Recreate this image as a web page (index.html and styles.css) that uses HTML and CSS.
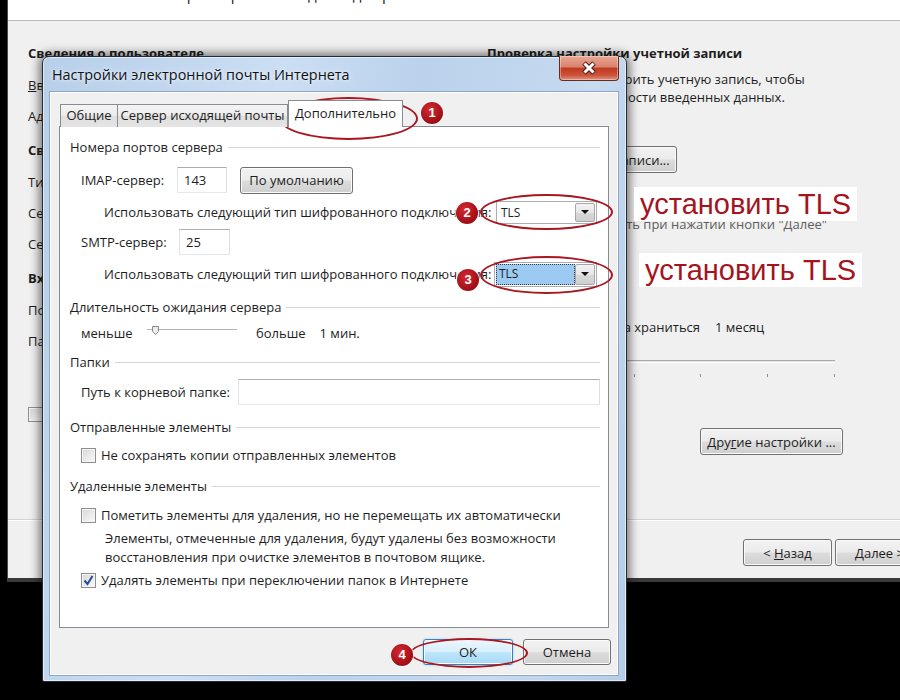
FILE: index.html
```html
<!DOCTYPE html>
<html lang="ru">
<head>
    <meta charset="UTF-8">
    <meta name="viewport" content="width=device-width, initial-scale=1.0">
    <title>Настройки электронной почты Интернета</title>
    <link rel="stylesheet" href="styles.css">
</head>
<body>
<div class="desk">
    <!-- main window behind the dialog -->
    <div class="bgwin">
        <div class="bg-head"><p>Все эти параметры необходимы для работы</p></div>
        <div class="bg-body">
            <div class="bg-left">
                <h3 class="bg-title">Сведения о пользователе</h3>
                <div class="bg-row"><u>В</u>ведите имя:</div>
                <div class="bg-row">Адрес электронной почты:</div>
                <h3 class="bg-title gap">Сведения о сервере</h3>
                <div class="bg-row">Тип учетной записи:</div>
                <div class="bg-row">Сервер входящей почты:</div>
                <div class="bg-row">Сервер исходящей почты (SMTP):</div>
                <h3 class="bg-title gap">Вход в систему</h3>
                <div class="bg-row">Пользователь:</div>
                <div class="bg-row">Пароль:</div>
                <div class="bg-check"><span class="cb"></span>Запомнить пароль</div>
            </div>
            <div class="bg-right">
                <h3 class="bg-title">Проверка настройки учетной записи</h3>
                <p class="bg-text">Рекомендуется проверить учетную запись, чтобы<br>убедиться в правильности введенных данных.</p>
                <button type="button" class="w7btn check-btn">Проверка учетной записи...</button>
                <div class="bg-auto"><span class="cb"></span>Проверять при нажатии кнопки "Далее"</div>
                <div class="bg-keep"><span class="keep-label">Автономная почта должна храниться</span><span class="keep-val">1 месяц</span></div>
                <div class="bg-slider">
                    <div class="bg-track"></div>
                    <div class="bg-ticks"><i></i><i></i><i></i><i></i><i></i><i></i></div>
                </div>
                <button type="button" class="w7btn more-btn">Дру<u>г</u>ие настройки ...</button>
            </div>
        </div>
        <div class="bg-foot">
            <button type="button" class="w7btn nav-btn">&lt; <u>Н</u>азад</button>
            <button type="button" class="w7btn nav-btn"><u>Д</u>алее &gt;</button>
        </div>
    </div>

    <!-- dialog window -->
    <div class="dlg">
        <div class="dlg-bar">
            <span class="dlg-title">Настройки электронной почты Интернета</span>
            <button type="button" class="dlg-close">
                <svg width="16" height="14" viewBox="0 0 16 14"><path d="M3 2L13 12M13 2L3 12" stroke="#4b1c14" stroke-width="5"/><path d="M3.5 2.5L12.5 11.5M12.5 2.5L3.5 11.5" stroke="#fff" stroke-width="3"/></svg>
            </button>
        </div>
        <div class="dlg-client">
            <div class="tabs">
                <div class="tab t1">Общие</div>
                <div class="tab t2">Сервер исходящей почты</div>
                <div class="tab t3">Дополнительно</div>
            </div>
            <div class="panel">
                <div class="grp g1">Номера портов сервера</div>
                <div class="row r-imap">
                    <span class="lbl">IMAP-сервер:</span>
                    <span class="field port">143</span>
                    <button type="button" class="w7btn def-btn">По умолчанию</button>
                </div>
                <div class="row enc r-enc1">
                    <span class="lbl">Использовать следующий тип шифрованного подключения:</span>
                    <span class="combo"><span class="combo-val">TLS</span><span class="combo-arrow"></span></span>
                </div>
                <div class="row r-smtp">
                    <span class="lbl">SMTP-сервер:</span>
                    <span class="field port">25</span>
                </div>
                <div class="row enc r-enc2">
                    <span class="lbl">Использовать следующий тип шифрованного подключения:</span>
                    <span class="combo sel"><span class="combo-val">TLS</span><span class="combo-arrow"></span></span>
                </div>
                <div class="grp g2">Длительность ожидания сервера</div>
                <div class="row r-slide">
                    <span class="lbl">меньше</span>
                    <svg class="slider" width="90" height="20" viewBox="0 0 90 20"><rect x="0" y="6" width="90" height="1" fill="#b3b3b3"/><rect x="0" y="7" width="90" height="1" fill="#fff"/><path d="M5.5 3.5h6v5l-3 3l-3-3z" fill="#ececec" stroke="#8a8a8a"/></svg>
                    <span class="more">больше</span>
                    <span class="mins">1 мин.</span>
                </div>
                <div class="grp g3">Папки</div>
                <div class="row r-path">
                    <span class="lbl">Путь к корневой папке:</span>
                    <span class="field path"></span>
                </div>
                <div class="grp g4">Отправленные элементы</div>
                <div class="row r-cb1"><span class="cb"></span>Не сохранять копии отправленных элементов</div>
                <div class="grp g5">Удаленные элементы</div>
                <div class="row r-cb2"><span class="cb"></span>Пометить элементы для удаления, но не перемещать их автоматически</div>
                <p class="hint">Элементы, отмеченные для удаления, будут удалены без возможности<br>восстановления при очистке элементов в почтовом ящике.</p>
                <div class="row r-cb3"><span class="cb on"><svg width="11" height="11" viewBox="0 0 11 11"><path d="M1.5 5.5l3 3.5l5-8" fill="none" stroke="#2a4d8f" stroke-width="2"/></svg></span>Удалять элементы при переключении папок в Интернете</div>
            </div>
            <div class="dlg-btns">
                <button type="button" class="w7btn ok">ОК</button>
                <button type="button" class="w7btn cancel">Отмена</button>
            </div>
        </div>
    </div>

    <!-- red markup on top of the screenshot -->
    <span class="ring ring-1"></span>
    <span class="ring ring-2"></span>
    <span class="ring ring-3"></span>
    <span class="ring ring-4"></span>
    <span class="badge b1">1</span>
    <span class="badge b2">2</span>
    <span class="badge b3">3</span>
    <span class="badge b4">4</span>
    <span class="tls-note n1">установить TLS</span>
    <span class="tls-note n2">установить TLS</span>
</div>
</body>
</html>
```

FILE: styles.css
```css
*{margin:0;padding:0;box-sizing:border-box;}
body{width:900px;height:700px;overflow:hidden;background:#000;font-family:"Open Sans","Noto Sans",sans-serif;font-size:13px;color:#1e1e1e;}
.desk{position:relative;width:900px;height:700px;}
button{font:inherit;color:inherit;}

/* shared win7 button + checkbox */
.w7btn{flex:none;height:27px;border:1px solid #707070;border-radius:3px;background:linear-gradient(#f2f2f2 0%,#ebebeb 49%,#dddddd 51%,#cfcfcf 100%);box-shadow:inset 0 0 0 1px #fbfbfb;color:#1e1e1e;padding:0 6px;white-space:nowrap;}
.cb{flex:none;width:15px;height:15px;border:1px solid #8e8f8f;background:linear-gradient(135deg,#d6d6d6,#fbfbfb);box-shadow:inset 0 0 0 1px #f4f4f4;margin-right:5px;display:flex;align-items:center;justify-content:center;}

/* background window */
.bgwin{margin-left:7px;width:893px;height:582px;background:#f0f0f0;border-left:1px solid #4a4a4a;border-bottom:4px solid #3a3a3a;display:flex;flex-direction:column;overflow:hidden;}
.bg-head{flex:none;height:21px;background:#fff;border-bottom:1px solid #b9b9b9;overflow:hidden;}
.bg-head p{font-size:15px;line-height:20px;margin-top:-16px;padding-left:104px;color:#222;}
.bg-body{flex:1;display:flex;padding-left:20px;}
.bg-left{flex:none;width:459px;padding-top:22px;}
.bg-right{flex:1;padding-top:22px;white-space:nowrap;}
.bg-title{font-size:13px;font-weight:bold;line-height:20px;margin-bottom:7px;}
.bg-title.gap{margin-top:8px;}
.bg-row{height:31px;line-height:31px;white-space:nowrap;}
.bg-check{height:20px;margin-top:47px;display:flex;align-items:center;}
.bg-text{line-height:18px;margin-top:4px;}
.check-btn{width:190px;margin-top:40px;}
.bg-auto{height:20px;margin-top:41px;display:flex;align-items:center;padding-left:64px;color:#5e5e5e;}
.bg-keep{height:20px;margin-top:83px;display:flex;align-items:center;}
.keep-label{width:213px;display:flex;justify-content:flex-end;white-space:nowrap;}
.keep-val{margin-left:15px;}
.bg-slider{width:335px;margin:23px 0 0 13px;}
.bg-track{height:3px;border-top:1px solid #a9a9a9;border-bottom:1px solid #fff;background:#e4e4e4;}
.bg-ticks{display:flex;justify-content:space-between;margin-top:11px;}
.bg-ticks i{width:1px;height:3px;background:#8d8d8d;}
.more-btn{width:143px;margin:51px 0 0 213px;}
.bg-foot{flex:none;height:59px;border-top:1px solid #d3d3d3;box-shadow:inset 0 1px 0 #fff;padding:19px 0 0 735px;display:flex;gap:3px;}
.nav-btn{width:89px;}

/* dialog */
.dlg{position:absolute;left:42px;top:56px;width:585px;height:626px;border:1px solid #262b33;border-radius:7px 7px 2px 2px;background:linear-gradient(100deg,#b7cfe9 0%,#cbdef3 35%,#bad2ec 55%,#c6daf0 80%,#b5cde8 100%);padding:0 8px 6px 7px;display:flex;flex-direction:column;box-shadow:0 0 10px 3px rgba(0,0,0,.5),inset 0 0 0 1px rgba(255,255,255,.55);}
.dlg-bar{flex:none;height:35px;display:flex;justify-content:space-between;align-items:flex-start;}
.dlg-title{font-size:14.4px;line-height:35px;padding-left:2px;color:#111;text-shadow:0 0 6px #e8f1fb,0 0 3px #e8f1fb;}
.dlg-close{width:60px;height:25px;margin:-1px -1px 0 0;border:1px solid #6a2a20;border-top:none;border-radius:0 0 4px 4px;background:linear-gradient(#e9a996 0%,#d9826d 45%,#c13a20 52%,#cb543a 80%,#e29580 100%);box-shadow:inset 0 0 0 1px rgba(255,255,255,.35);display:flex;align-items:center;justify-content:center;}
.dlg-client{flex:1;background:#f0f0f0;border:1px solid #fbfdff;box-shadow:0 0 0 1px #8fa7c4;padding:7px 8px 0 8px;display:flex;flex-direction:column;}

.tabs{flex:none;display:flex;align-items:flex-end;height:27px;padding-left:1px;margin-bottom:-1px;position:relative;z-index:1;}
.tab{height:23px;border:1px solid #898c95;border-bottom:none;background:linear-gradient(#f4f4f4,#ebebeb 50%,#dfdfdf 51%,#e4e4e4);text-align:center;line-height:21px;white-space:nowrap;}
.t1{width:58px;}
.t2{width:171px;margin-left:-1px;}
.t3{width:115px;height:27px;background:#fff;line-height:25px;}

.panel{flex:none;height:502px;background:#fff;border:1px solid #898c95;display:flex;flex-direction:column;}
.grp{flex:none;display:flex;align-items:center;height:20px;margin:0 8px 0 10px;white-space:nowrap;}
.grp::after{content:"";flex:1;height:1px;background:#d5d5d5;box-shadow:0 1px 0 #fff;margin-left:5px;}
.g1{margin-top:10px;}
.g2{margin-top:10px;}
.g3{margin-top:9px;}
.g4{margin-top:12px;}
.g5{margin-top:11px;}

.row{flex:none;display:flex;align-items:center;padding-left:21px;white-space:nowrap;}
.lbl{flex:none;white-space:nowrap;overflow:hidden;}
.field{flex:none;height:26px;border:1px solid;border-color:#abadb3 #dbdfe6 #e3e9ef #e2e3ea;background:#fff;padding-left:6px;line-height:24px;}
.r-imap{height:26px;margin-top:10px;}
.r-imap .lbl{width:96px;}
.r-imap .port{width:50px;}
.def-btn{width:113px;margin-left:13px;}
.enc{height:26px;padding-left:44px;}
.r-enc1{margin-top:6px;}
.r-enc1 .lbl{width:392px;}
.r-enc2{margin-top:6px;}
.r-enc2 .lbl{width:390px;}
.r-smtp{height:26px;margin-top:4px;}
.r-smtp .lbl{width:98px;}
.r-smtp .port{width:51px;}

.combo{flex:none;display:flex;width:101px;height:23px;border:1px solid #abadb3;background:#fff;padding:1px;}
.r-enc2 .combo{width:103px;height:25px;}
.combo-val{flex:1;padding-left:3px;line-height:19px;font-size:12px;}
.sel .combo-val{background:#9dcaf2;outline:1px dotted #3a3a3a;outline-offset:-1px;}
.combo-arrow{flex:none;width:20px;border:1px solid #a7a7a7;border-radius:2px;background:linear-gradient(#f3f3f3,#e6e6e6 50%,#d8d8d8 51%,#d0d0d0);display:flex;align-items:center;justify-content:center;}
.combo-arrow::after{content:"";border-left:4px solid transparent;border-right:4px solid transparent;border-top:4px solid #111;}

.r-slide{height:20px;margin-top:6px;}
.r-slide .lbl{width:66px;}
.slider{flex:none;}
.more{margin-left:19px;}
.mins{margin-left:14px;}
.r-path{height:26px;margin-top:7px;}
.r-path .lbl{width:157px;}
.path{width:362px;}
.r-cb1{height:20px;margin-top:8px;}
.r-cb2{height:20px;margin-top:9px;}
.hint{flex:none;margin-top:4px;padding-left:45px;line-height:19px;white-space:nowrap;}
.r-cb3{height:20px;margin-top:3px;}

.dlg-btns{flex:none;display:flex;justify-content:flex-end;gap:10px;margin:11px -2px 0 0;}
.ok{width:90px;height:26px;border-color:#3c7fb1;background:linear-gradient(#eaf6fd 0%,#d9f0fc 49%,#bee6fd 51%,#a7d9f5 100%);box-shadow:inset 0 0 0 1px #f4fbff,0 0 2px #8fc6ee;}
.cancel{width:88px;height:26px;}

/* red markup */
.ring{position:absolute;border:2px solid #a9161f;border-radius:50%;}
.ring-1{left:279px;top:97px;width:139px;height:43px;}
.ring-2{left:480px;top:194px;width:133px;height:36px;}
.ring-3{left:480px;top:256px;width:133px;height:38px;}
.ring-4{left:410px;top:638px;width:118px;height:30px;}
.badge{position:absolute;width:22px;height:22px;border-radius:50%;background:radial-gradient(circle at 40% 35%,#d42a31,#a30f17 65%,#8a0a10);color:#fff;font:bold 13px/22px "Liberation Sans",Arial,sans-serif;text-align:center;box-shadow:0 0 0 1px rgba(255,255,255,.7);}
.b1{left:421px;top:102px;}
.b2{left:456px;top:202px;}
.b3{left:457px;top:269px;}
.b4{left:391px;top:644px;}
.tls-note{position:absolute;background:#fff;color:#a5141e;font:29px/34px "Liberation Sans",Arial,sans-serif;padding:0 6px;white-space:nowrap;}
.n1{left:634px;top:187px;}
.n2{left:639px;top:253px;}
```
